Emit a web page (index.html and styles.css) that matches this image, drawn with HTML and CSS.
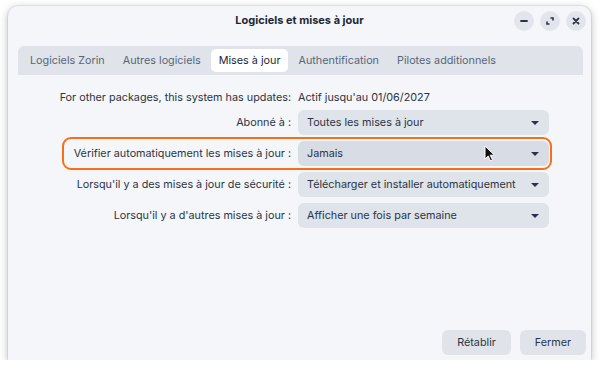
FILE: index.html
```html
<!DOCTYPE html>
<html lang="fr">
  <head>
    <meta charset="UTF-8" />
    <meta name="viewport" content="width=device-width, initial-scale=1.0" />
    <title>Logiciels et mises à jour</title>
    <link rel="stylesheet" href="styles.css">
  </head>
  <body>
    <div class="window">
      <div class="titlebar">
        <span class="title">Logiciels et mises à jour</span>
        <div class="controls">
          <button class="ctl" aria-label="Réduire">
            <svg width="10" height="10" viewBox="0 0 10 10"><path d="M2 5h6" stroke="#2b3445" stroke-width="1.8" stroke-linecap="round"/></svg>
          </button>
          <button class="ctl" aria-label="Agrandir">
            <svg width="10" height="10" viewBox="0 0 10 10"><path d="M5.5 2h2.5v2.5M4.5 8H2V5.5" fill="none" stroke="#2b3445" stroke-width="1.6"/></svg>
          </button>
          <button class="ctl" aria-label="Fermer">
            <svg width="10" height="10" viewBox="0 0 10 10"><path d="M2.5 2.5l5 5M7.5 2.5l-5 5" stroke="#2b3445" stroke-width="1.8" stroke-linecap="round"/></svg>
          </button>
        </div>
      </div>

      <div class="tabs">
        <span class="tab">Logiciels Zorin</span>
        <span class="tab">Autres logiciels</span>
        <span class="tab active">Mises à jour</span>
        <span class="tab">Authentification</span>
        <span class="tab">Pilotes additionnels</span>
      </div>

      <div class="form">
        <div class="row info">
          <span class="label">For other packages, this system has updates:</span>
          <span class="value">Actif jusqu'au 01/06/2027</span>
        </div>
        <div class="row">
          <span class="label">Abonné à :</span>
          <div class="combo"><span>Toutes les mises à jour</span><i class="arrow"></i></div>
        </div>
        <div class="row highlight">
          <span class="label">Vérifier automatiquement les mises à jour :</span>
          <div class="combo hover"><span>Jamais</span><i class="arrow"></i></div>
          <svg class="cursor" width="12" height="18" viewBox="0 0 12 18">
            <path d="M1 1v13l3.2-3 2.3 5 2-1-2.3-4.8H10.5z" fill="#111" stroke="#fff" stroke-width="1"/>
          </svg>
        </div>
        <div class="row">
          <span class="label">Lorsqu'il y a des mises à jour de sécurité :</span>
          <div class="combo"><span>Télécharger et installer automatiquement</span><i class="arrow"></i></div>
        </div>
        <div class="row">
          <span class="label">Lorsqu'il y a d'autres mises à jour :</span>
          <div class="combo"><span>Afficher une fois par semaine</span><i class="arrow"></i></div>
        </div>
      </div>

      <div class="actions">
        <button class="btn reset">Rétablir</button>
        <button class="btn close">Fermer</button>
      </div>
    </div>
  </body>
</html>
```

FILE: styles.css
```css
body {
  margin: 0;
  background-color: #ffffff;
  font-family: Inter, "Noto Sans", sans-serif;
  font-size: 10.8px;
  color: #2b3445;
}
.window {
  margin: 6px 0 0 8px;
  width: 583px;
  height: 354px;
  background-color: #f4f6fa;
  border-radius: 10px 10px 0 0;
  box-shadow: 0 2px 8px rgba(0, 0, 0, 0.28), 0 0 0 1px rgba(0, 0, 0, 0.06);
  display: flex;
  flex-direction: column;
  position: relative;
}
.titlebar {
  height: 28px;
  display: flex;
  align-items: center;
  justify-content: center;
  position: relative;
}
.title {
  font-weight: 700;
  font-size: 11px;
  color: #1f2735;
}
.controls {
  position: absolute;
  right: 5px;
  top: 5px;
  display: flex;
  gap: 6px;
}
.ctl {
  width: 20px;
  height: 20px;
  border: none;
  border-radius: 50%;
  background-color: #e2e6ec;
  padding: 0;
  display: flex;
  align-items: center;
  justify-content: center;
}
.tabs {
  margin: 12px 8px 0 10px;
  height: 29px;
  background-color: #e0e4ea;
  border-radius: 6px 6px 0 0;
  display: flex;
  align-items: center;
  padding-left: 3px;
}
.tab {
  padding: 5px 9px;
  color: #56657c;
  border-radius: 5px;
}
.tab.active {
  background-color: #ffffff;
  color: #1f2735;
  padding: 5px 8px;
  margin: 0 1px;
}
.form {
  display: flex;
  flex-direction: column;
  gap: 6px;
  margin-top: 12px;
}
.row {
  display: flex;
  align-items: center;
  gap: 7px;
  position: relative;
}
.row.info {
  height: 20px;
  margin-bottom: -3px;
}
.label {
  width: 283px;
  text-align: right;
  color: #2b3445;
  white-space: nowrap;
}
.value {
  color: #2b3445;
}
.combo {
  width: 251px;
  height: 25px;
  box-sizing: border-box;
  background-color: #dfe3ea;
  border-radius: 6px;
  display: flex;
  align-items: center;
  justify-content: space-between;
  padding: 0 9px 0 9px;
  color: #2b3445;
  white-space: nowrap;
}
.combo.hover {
  background-color: #d8dce4;
}
.arrow {
  width: 0;
  height: 0;
  border-left: 4px solid transparent;
  border-right: 4px solid transparent;
  border-top: 4px solid #28324a;
  margin-right: 1px;
}
.highlight::after {
  content: "";
  position: absolute;
  left: 54px;
  width: 490px;
  top: -4px;
  bottom: -4px;
  border: 2.5px solid #f76f16;
  border-radius: 9px;
  box-sizing: border-box;
  pointer-events: none;
}
.cursor {
  position: absolute;
  left: 476px;
  top: 4px;
  z-index: 2;
}
.actions {
  margin-top: auto;
  display: flex;
  justify-content: flex-end;
  gap: 9px;
  padding: 0 5px 5px 0;
}
.btn {
  height: 25px;
  border: none;
  border-radius: 6px;
  background-color: #e0e4ea;
  color: #2b3445;
  font-family: Inter, "Noto Sans", sans-serif;
  font-size: 10.8px;
  padding: 0;
}
.btn.reset {
  width: 69px;
}
.btn.close {
  width: 66px;
}
```
